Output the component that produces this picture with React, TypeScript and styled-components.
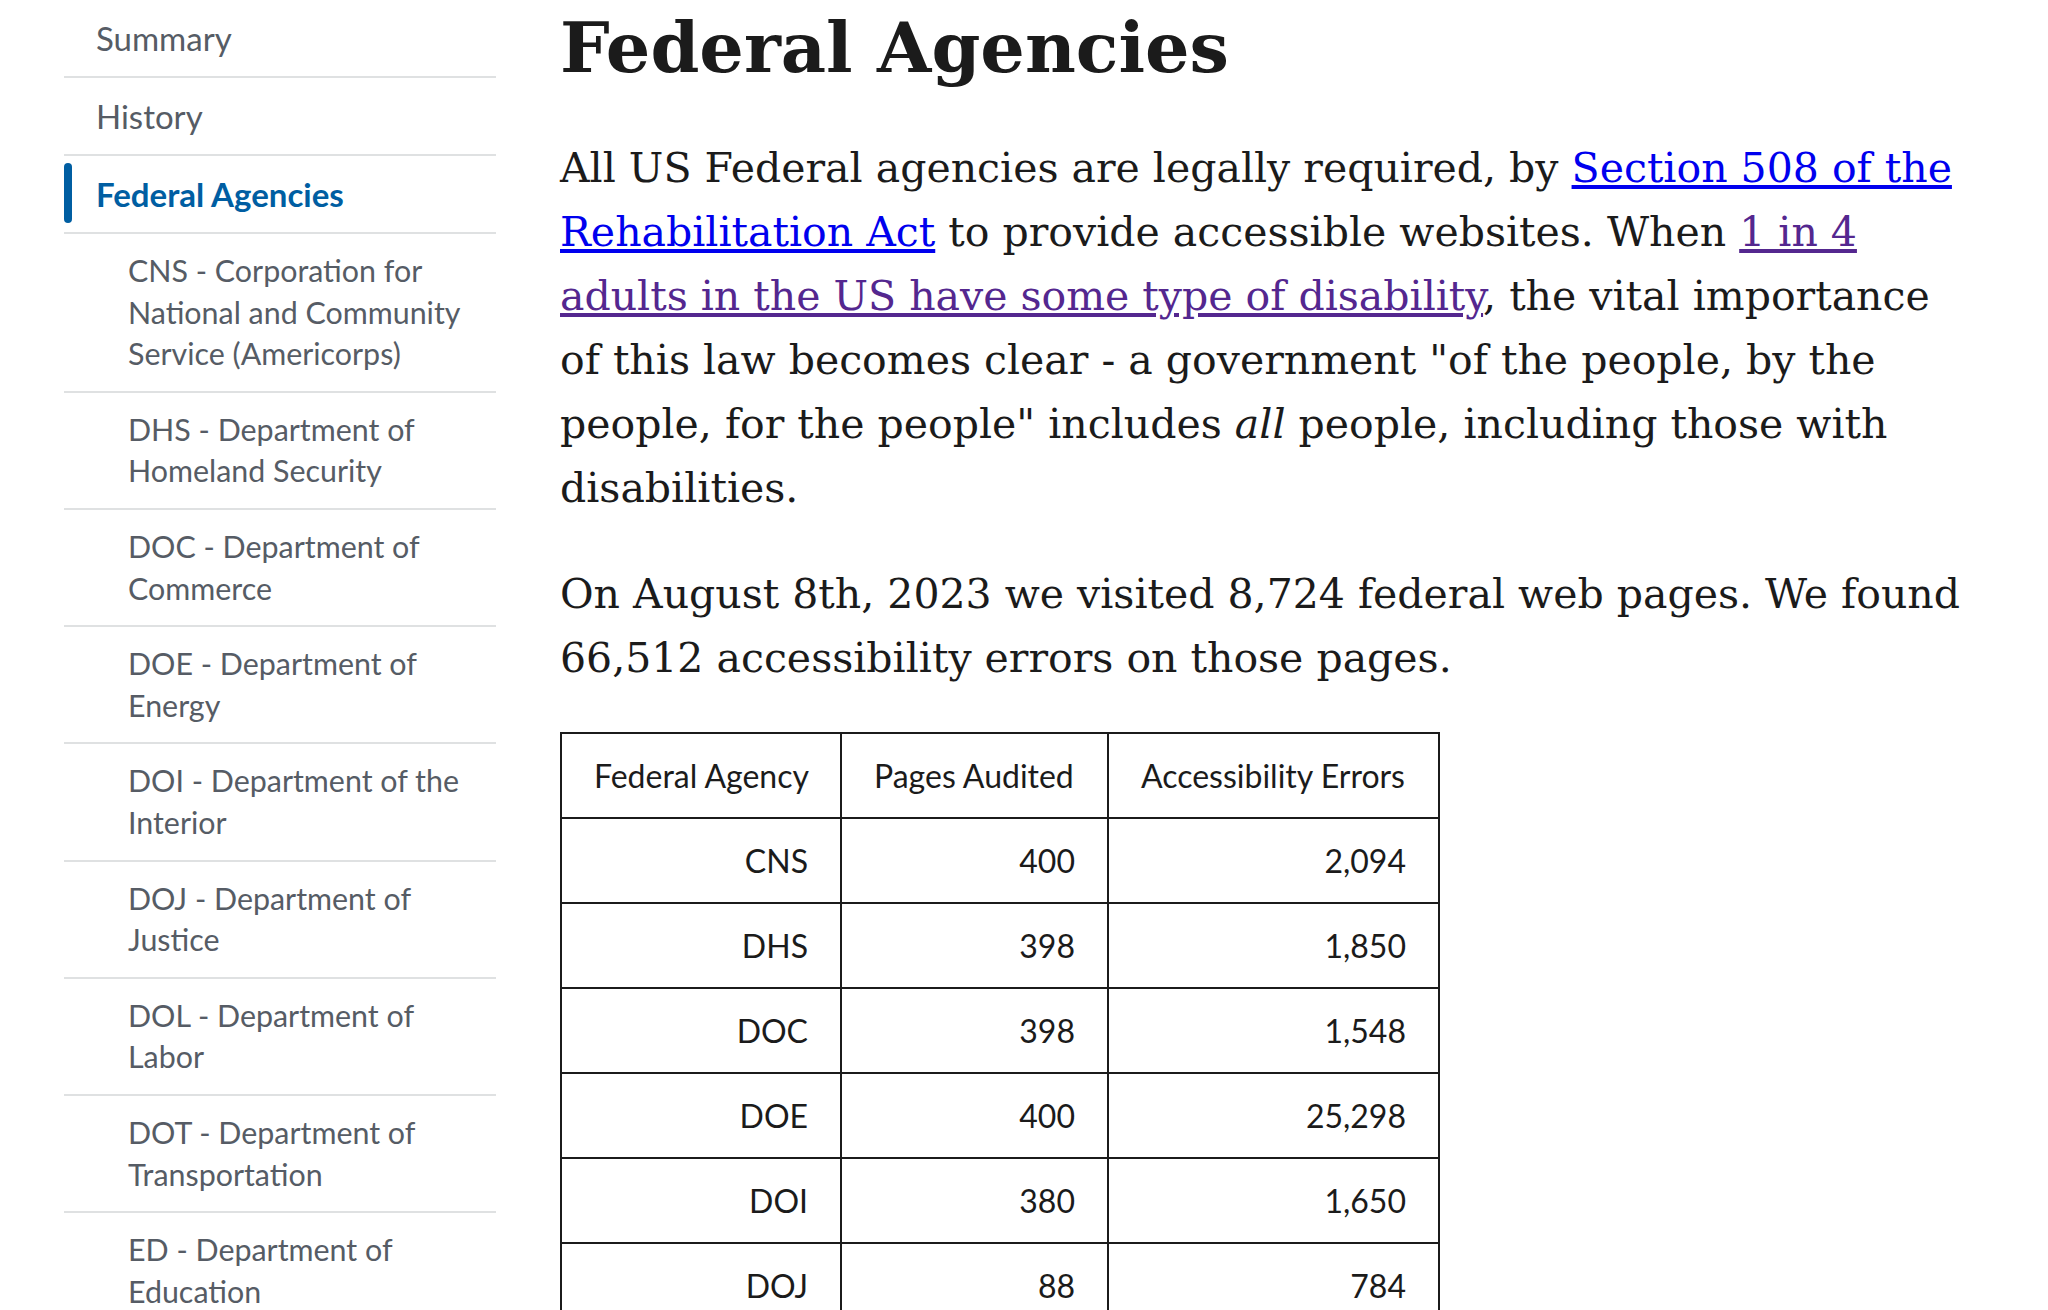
import React from "react";
import styled, { createGlobalStyle, css } from "styled-components";

const GlobalStyle = createGlobalStyle`
  *, *::before, *::after { box-sizing: border-box; }
  html, body {
    margin: 0;
    padding: 0;
    background: #ffffff;
    overflow: hidden;
  }
`;

const SANS = `"Lato", "Source Sans Pro", "Noto Sans", sans-serif`;
const SERIF = `"DejaVu Serif", "Merriweather", Georgia, serif`;

const Page = styled.div`
  display: grid;
  grid-template-columns: 432px 1412px;
  column-gap: 64px;
  padding-left: 64px;
  align-items: start;
`;

const SideNav = styled.nav``;

const NavList = styled.ul`
  list-style: none;
  margin: 0;
  padding: 0;
`;

const NavItem = styled.li`
  border-top: 2px solid #dfe1e2;
  &:first-child {
    border-top: none;
  }
`;

const NavLink = styled.a<{ $current?: boolean }>`
  display: block;
  position: relative;
  padding: 16px 32px;
  font-family: ${SANS};
  font-size: 33px;
  line-height: 44px;
  color: #565c65;
  text-decoration: none;
  ${(p) =>
    p.$current &&
    css`
      color: #005ea2;
      font-weight: 700;
      &::after {
        content: "";
        position: absolute;
        left: 0;
        top: 7px;
        bottom: 9px;
        width: 8px;
        border-radius: 4px;
        background: #005ea2;
      }
    `}
`;

const SubList = styled.ul`
  list-style: none;
  margin: 0;
  padding: 0;
`;

const SubItem = styled.li`
  border-top: 2px solid #dfe1e2;
`;

const SubLink = styled.a`
  display: block;
  padding: 16px 16px 16px 64px;
  font-family: ${SANS};
  font-size: 30.4px;
  line-height: 41.6px;
  color: #565c65;
  text-decoration: none;
`;

const Main = styled.main`
  color: #1b1b1b;
`;

const Title = styled.h1`
  margin: 0 0 40px;
  font-family: ${SERIF};
  font-weight: 700;
  font-size: 70px;
  line-height: 96px;
  color: #1b1b1b;
`;

const Prose = styled.p`
  margin: 0 0 42px;
  font-family: ${SERIF};
  font-size: 41px;
  line-height: 64px;
  color: #1b1b1b;
`;

const Link = styled.a<{ $visited?: boolean }>`
  color: ${(p) => (p.$visited ? "#54278f" : "#0000ee")};
  text-decoration: underline;
`;

const Table = styled.table`
  border-collapse: collapse;
  table-layout: fixed;
  width: 878px;
  font-family: ${SANS};
  font-size: 32px;
  line-height: 51px;
  color: #1b1b1b;
`;

const HeadCell = styled.th<{ $w: number }>`
  width: ${(p) => p.$w}px;
  border: 2px solid #1b1b1b;
  padding: 16px 32px;
  font-weight: 400;
  text-align: left;
  white-space: nowrap;
`;

const Cell = styled.td`
  border: 2px solid #1b1b1b;
  padding: 16px 32px;
  text-align: right;
  white-space: nowrap;
`;

const subAgencies = [
  "CNS - Corporation for National and Community Service (Americorps)",
  "DHS - Department of Homeland Security",
  "DOC - Department of Commerce",
  "DOE - Department of Energy",
  "DOI - Department of the Interior",
  "DOJ - Department of Justice",
  "DOL - Department of Labor",
  "DOT - Department of Transportation",
  "ED - Department of Education",
];

const rows: [string, string, string][] = [
  ["CNS", "400", "2,094"],
  ["DHS", "398", "1,850"],
  ["DOC", "398", "1,548"],
  ["DOE", "400", "25,298"],
  ["DOI", "380", "1,650"],
  ["DOJ", "88", "784"],
];

export default function App() {
  return (
    <>
      <GlobalStyle />
      <Page>
        <SideNav aria-label="Side navigation">
          <NavList>
            <NavItem>
              <NavLink href="#summary">Summary</NavLink>
            </NavItem>
            <NavItem>
              <NavLink href="#history">History</NavLink>
            </NavItem>
            <NavItem>
              <NavLink href="#federal" $current aria-current="page">
                Federal Agencies
              </NavLink>
              <SubList>
                {subAgencies.map((s) => (
                  <SubItem key={s}>
                    <SubLink href="#">{s}</SubLink>
                  </SubItem>
                ))}
              </SubList>
            </NavItem>
          </NavList>
        </SideNav>
        <Main>
          <Title>Federal Agencies</Title>
          <Prose>
            All US Federal agencies are legally required, by{" "}
            <Link href="#">Section 508 of the Rehabilitation Act</Link> to provide
            accessible websites. When{" "}
            <Link href="#" $visited>
              1 in 4 adults in the US have some type of disability
            </Link>
            , the vital importance of this law becomes clear - a government "of the
            people, by the people, for the people" includes <em>all</em> people,
            including those with disabilities.
          </Prose>
          <Prose>
            On August 8th, 2023 we visited 8,724 federal web pages. We found 66,512
            accessibility errors on those pages.
          </Prose>
          <Table>
            <thead>
              <tr>
                <HeadCell $w={280}>Federal Agency</HeadCell>
                <HeadCell $w={267}>Pages Audited</HeadCell>
                <HeadCell $w={331}>Accessibility Errors</HeadCell>
              </tr>
            </thead>
            <tbody>
              {rows.map((r) => (
                <tr key={r[0]}>
                  <Cell>{r[0]}</Cell>
                  <Cell>{r[1]}</Cell>
                  <Cell>{r[2]}</Cell>
                </tr>
              ))}
            </tbody>
          </Table>
        </Main>
      </Page>
    </>
  );
}
